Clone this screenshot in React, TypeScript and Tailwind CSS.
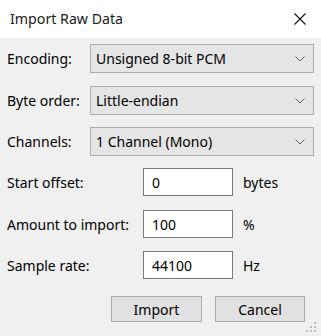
import React from "react";

const font = { fontFamily: '"Noto Sans", "Open Sans", sans-serif' };

function Chevron() {
  return (
    <svg width="10" height="6" viewBox="0 0 10 6" className="shrink-0">
      <path d="M0.5 0.5 L5 5 L9.5 0.5" fill="none" stroke="#606060" strokeWidth="1" />
    </svg>
  );
}

function Combo({ label, value, mt }: { label: string; value: string; mt: string }) {
  return (
    <div className={`flex items-center ${mt}`}>
      <div className="w-[83px] shrink-0">{label}</div>
      <div className="flex h-[29px] w-[224px] items-center justify-between border border-[#adadad] bg-[#e5e5e5] pl-[5px] pr-[8px]">
        <span>{value}</span>
        <Chevron />
      </div>
    </div>
  );
}

function Field({ label, value, unit, mt }: { label: string; value: string; unit: string; mt: string }) {
  return (
    <div className={`flex items-center ${mt}`}>
      <div className="w-[136px] shrink-0">{label}</div>
      <div className="flex h-[28px] w-[90px] items-center border border-[#7a7a7a] bg-white pl-[8px]">{value}</div>
      <div className="ml-[10px]">{unit}</div>
    </div>
  );
}

export default function App() {
  return (
    <div className="flex h-[336px] w-[321px] flex-col bg-[#f0f0f0] text-[14px] text-black" style={font}>
      <div className="flex h-[38px] shrink-0 items-center justify-between bg-white pl-[10px] pr-[15px]">
        <span className="text-[14.2px] text-[#1a1a1a]">Import Raw Data</span>
        <svg width="12" height="12" viewBox="0 0 12 12">
          <path d="M0.5 0.5 L11.5 11.5 M11.5 0.5 L0.5 11.5" stroke="#111" strokeWidth="1.1" />
        </svg>
      </div>
      <div className="relative flex flex-1 flex-col pl-[7px]">
        <Combo label="Encoding:" value="Unsigned 8-bit PCM" mt="mt-[6px]" />
        <Combo label="Byte order:" value="Little-endian" mt="mt-[13px]" />
        <Combo label="Channels:" value="1 Channel (Mono)" mt="mt-[12px]" />
        <Field label="Start offset:" value="0" unit="bytes" mt="mt-[12px]" />
        <Field label="Amount to import:" value="100" unit="%" mt="mt-[14px]" />
        <Field label="Sample rate:" value="44100" unit="Hz" mt="mt-[13px]" />
        <div className="mt-[17px] flex gap-[13px] pl-[104px]">
          <button className="flex h-[26px] w-[91px] items-center justify-center border border-[#adadad] bg-[#e1e1e1]">Import</button>
          <button className="flex h-[26px] w-[90px] items-center justify-center border border-[#adadad] bg-[#e1e1e1]">Cancel</button>
        </div>
        <svg className="absolute bottom-[3px] right-[4px]" width="11" height="11" viewBox="0 0 11 11">
          <rect x="8" y="0" width="2" height="2" fill="#bdbdbd" />
          <rect x="4" y="4" width="2" height="2" fill="#bdbdbd" />
          <rect x="8" y="4" width="2" height="2" fill="#bdbdbd" />
          <rect x="0" y="8" width="2" height="2" fill="#bdbdbd" />
          <rect x="4" y="8" width="2" height="2" fill="#bdbdbd" />
          <rect x="8" y="8" width="2" height="2" fill="#bdbdbd" />
        </svg>
      </div>
    </div>
  );
}
